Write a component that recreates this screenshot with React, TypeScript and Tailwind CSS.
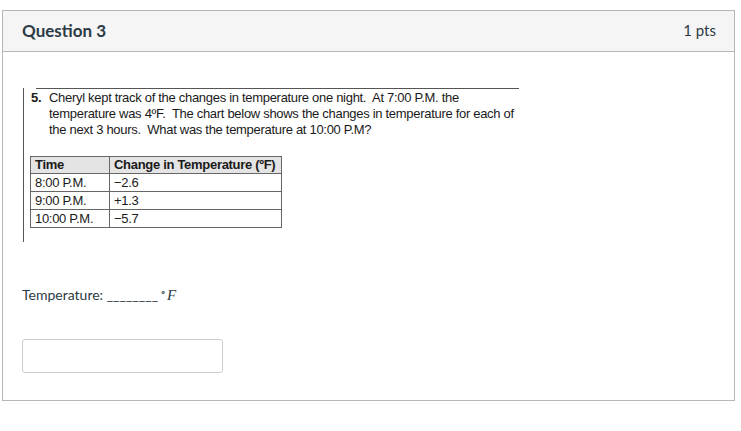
import React from "react";

const scanFont = { fontFamily: '"Liberation Sans", Arial, sans-serif' };

export default function App() {
  const rows = [
    ["8:00 P.M.", "\u22122.6"],
    ["9:00 P.M.", "+1.3"],
    ["10:00 P.M.", "\u22125.7"],
  ];
  return (
    <div className="w-[741px] h-[431px] bg-white pt-[10px] pl-[2px]" style={{ fontFamily: 'Lato, "Open Sans", sans-serif' }}>
      <div className="w-[733px] border border-[#b4b8bb] text-[#2d3b45]">
        <div className="h-[41px] bg-[#f5f5f5] border-b border-[#b4b8bb] flex items-center justify-between pl-[19px] pr-[18px] pb-[1px]">
          <span className="text-[17px] font-bold">Question 3</span>
          <span className="text-[15px]">1 pts</span>
        </div>
        <div className="pl-[20px] pt-[36px] pb-[27px]">
          <div className="w-[496px] h-[154px] border-l border-[#555] flex flex-col text-[#1a1a1a]" style={scanFont}>
            <div className="ml-[12px] w-[483px] h-px bg-[#555]" />
            <div className="flex pl-[7px] pt-[1px] text-[13px] leading-[16px] tracking-[-0.3px]">
              <span className="w-[18px] font-bold">5.</span>
              <div className="whitespace-pre">
                <div>Cheryl kept track of the changes in temperature one night.  At 7:00 P.M. the</div>
                <div>temperature was 4ºF.  The chart below shows the changes in temperature for each of</div>
                <div>the next 3 hours.  What was the temperature at 10:00 P.M?</div>
              </div>
            </div>
            <table className="ml-[6px] mt-[18px] w-[252px] border-collapse text-[13px] leading-[16px] tracking-[-0.3px]">
              <thead>
                <tr className="bg-[#e4e4e4] h-[17px]">
                  <th className="w-[79px] border border-[#666] text-left font-bold px-[4px] py-0">Time</th>
                  <th className="border border-[#666] text-left font-bold px-[4px] py-0">Change in Temperature (ºF)</th>
                </tr>
              </thead>
              <tbody>
                {rows.map(([t, c]) => (
                  <tr key={t} className="h-[18px]">
                    <td className="border border-[#666] px-[4px] py-0">{t}</td>
                    <td className="border border-[#666] px-[4px] py-0">{c}</td>
                  </tr>
                ))}
              </tbody>
            </table>
          </div>
          <div className="mt-[44px] -ml-[1px] text-[14px] leading-[18px] flex items-baseline">
            <span>Temperature: ________</span>
            <span className="ml-[2px] text-[15px]" style={{ fontFamily: '"Liberation Serif", serif' }}>
              <sup className="text-[10px] mr-[1px]">∘</sup>
              <i>F</i>
            </span>
          </div>
          <div className="mt-[35px] -ml-[1px] w-[201px] h-[34px] border border-[#c7cdd1] rounded-[3px] bg-white" />
        </div>
      </div>
    </div>
  );
}
